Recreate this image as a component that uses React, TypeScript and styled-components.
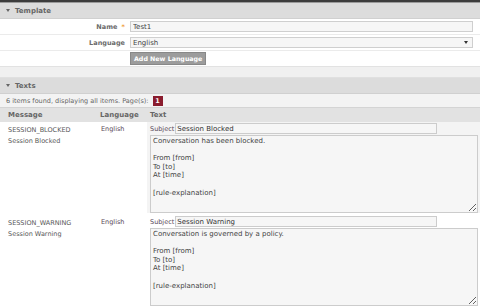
import styled, { createGlobalStyle } from "styled-components"

const GlobalStyle = createGlobalStyle`
    html, body {
        margin: 0;
        padding: 0;
        background: #ffffff;
    }
    body {
        width: 480px;
        height: 308px;
        overflow: hidden;
        font-family: "DejaVu Sans", Verdana, sans-serif;
        font-size: 6.5px;
        color: #555555;
    }
`

const messages = [
    {
        code: "SESSION_BLOCKED",
        name: "Session Blocked",
        language: "English",
        subject: "Session Blocked",
        body: "Conversation has been blocked.\n\nFrom [from]\nTo [to]\nAt [time]\n\n[rule-explanation]",
        shaded: true,
    },
    {
        code: "SESSION_WARNING",
        name: "Session Warning",
        language: "English",
        subject: "Session Warning",
        body: "Conversation is governed by a policy.\n\nFrom [from]\nTo [to]\nAt [time]\n\n[rule-explanation]",
        shaded: false,
    },
]

export default function App() {
    return (
        <>
            <GlobalStyle />
            <Page>
                <TopBar />
                <SectionHeader>
                    <Caret />
                    Template
                </SectionHeader>
                <FormRow>
                    <Label>
                        Name <Required>*</Required>
                    </Label>
                    <Input defaultValue="Test1" />
                </FormRow>
                <FormRow>
                    <Label>Language</Label>
                    <Select>
                        English
                        <SelectArrow />
                    </Select>
                </FormRow>
                <FormRow $last>
                    <span />
                    <div>
                        <Button>Add New Language</Button>
                    </div>
                </FormRow>
                <Spacer />
                <SectionHeader>
                    <Caret />
                    Texts
                </SectionHeader>
                <InfoBar>
                    6 items found, displaying all items. Page(s):
                    <PageBadge>1</PageBadge>
                </InfoBar>
                <Table>
                    <HeadRow>
                        <HeadCell>Message</HeadCell>
                        <HeadCell>Language</HeadCell>
                        <HeadCell>Text</HeadCell>
                    </HeadRow>
                    {messages.map((m) => (
                        <Row key={m.code} $shaded={m.shaded}>
                            <MessageCell>
                                <div>{m.code}</div>
                                <div>{m.name}</div>
                            </MessageCell>
                            <LangCell>{m.language}</LangCell>
                            <TextCell>
                                <SubjectLine>
                                    <SubjectLabel>Subject</SubjectLabel>
                                    <SubjectInput defaultValue={m.subject} />
                                </SubjectLine>
                                <Body defaultValue={m.body} readOnly />
                            </TextCell>
                        </Row>
                    ))}
                </Table>
            </Page>
        </>
    )
}

const Page = styled.div`
    width: 480px;
    display: flex;
    flex-direction: column;
`

const TopBar = styled.div`
    height: 2px;
    background: #3c3c3c;
    border-bottom: 1px solid #9a9a9a;
`

const SectionHeader = styled.div`
    height: 15px;
    display: flex;
    align-items: center;
    gap: 5px;
    padding-left: 6px;
    background: #dcdcdc;
    border-bottom: 1px solid #d0d0d0;
    font-weight: bold;
    font-size: 7px;
    color: #666666;
`

const Caret = styled.span`
    width: 0;
    height: 0;
    border-left: 2.5px solid transparent;
    border-right: 2.5px solid transparent;
    border-top: 3px solid #666666;
`

const FormRow = styled.div<{ $last?: boolean }>`
    height: 15px;
    display: grid;
    grid-template-columns: 127px 1fr;
    align-items: center;
    gap: 3px;
    padding-right: 7px;
    border-bottom: 1px solid ${(p) => (p.$last ? "#e2e2e2" : "#ebebeb")};
`

const Label = styled.label`
    text-align: right;
    font-weight: bold;
    color: #6a6a6a;
    padding-right: 2px;
`

const Required = styled.span`
    color: #f0a040;
    margin-left: 2px;
`

const Input = styled.input`
    box-sizing: border-box;
    width: 100%;
    height: 11px;
    padding: 0 2px;
    border: 1px solid #cfcfcf;
    background: #f6f6f6;
    font-family: inherit;
    font-size: 7px;
    color: #444444;
    outline: none;
`

const Select = styled.div`
    box-sizing: border-box;
    position: relative;
    height: 11px;
    display: flex;
    align-items: center;
    padding: 0 2px;
    border: 1px solid #cfcfcf;
    background: #f6f6f6;
    font-size: 7px;
    color: #444444;
`

const SelectArrow = styled.span`
    position: absolute;
    right: 4px;
    top: 3px;
    width: 0;
    height: 0;
    border-left: 2px solid transparent;
    border-right: 2px solid transparent;
    border-top: 3px solid #333333;
`

const Button = styled.button`
    height: 13px;
    padding: 0 3px;
    border: 1px solid #888888;
    background: #9c9c9c;
    color: #ffffff;
    font-family: inherit;
    font-size: 6.3px;
    font-weight: bold;
    cursor: pointer;
`

const Spacer = styled.div`
    height: 10px;
    background: #f0f0f0;
    border-bottom: 1px solid #e0e0e0;
`

const InfoBar = styled.div`
    height: 13px;
    display: flex;
    align-items: center;
    padding-left: 6px;
    gap: 4px;
    background: #f3f3f3;
    color: #666666;
`

const PageBadge = styled.span`
    width: 10px;
    height: 10px;
    display: inline-flex;
    align-items: center;
    justify-content: center;
    background: #8a1c2e;
    color: #ffffff;
    font-weight: bold;
    font-size: 6.5px;
`

const Table = styled.div`
    display: flex;
    flex-direction: column;
`

const columns = `92px 55px 1fr`

const HeadRow = styled.div`
    height: 14px;
    display: grid;
    grid-template-columns: ${columns};
    align-items: center;
    background: #e2e2e2;
    border-top: 1px solid #d4d4d4;
`

const HeadCell = styled.div`
    padding-left: 8px;
    font-weight: bold;
    font-size: 7px;
    color: #666666;

    &:nth-child(3) {
        padding-left: 3px;
    }
`

const Row = styled.div<{ $shaded: boolean }>`
    display: grid;
    grid-template-columns: ${columns};
    background: ${(p) => (p.$shaded ? "#f4f4f4" : "#ffffff")};
    border-bottom: 2px solid #ffffff;
`

const MessageCell = styled.div`
    padding: 4px 0 0 8px;
    display: flex;
    flex-direction: column;
    gap: 3px;
    color: #585858;
    background: #ffffff;
`

const LangCell = styled.div`
    padding: 3px 0 0 9px;
    color: #584858;
    background: #ffffff;
`

const TextCell = styled.div`
    padding: 1px 2px 0 3px;
    display: flex;
    flex-direction: column;
    gap: 1px;
`

const SubjectLine = styled.div`
    display: flex;
    align-items: center;
    gap: 1px;
`

const SubjectLabel = styled.span`
    color: #584858;
`

const SubjectInput = styled.input`
    box-sizing: border-box;
    width: 262px;
    height: 11px;
    padding: 0 1px;
    border: 1px solid #cccccc;
    background: #f6f6f6;
    font-family: inherit;
    font-size: 7px;
    color: #333333;
    outline: none;
`

const Body = styled.textarea`
    box-sizing: border-box;
    width: 100%;
    height: 78px;
    padding: 1px 2px;
    border: 1px solid #cccccc;
    background: #f6f6f6;
    font-family: inherit;
    font-size: 7px;
    line-height: 8.6px;
    color: #444444;
    outline: none;
    overflow: hidden;
`
